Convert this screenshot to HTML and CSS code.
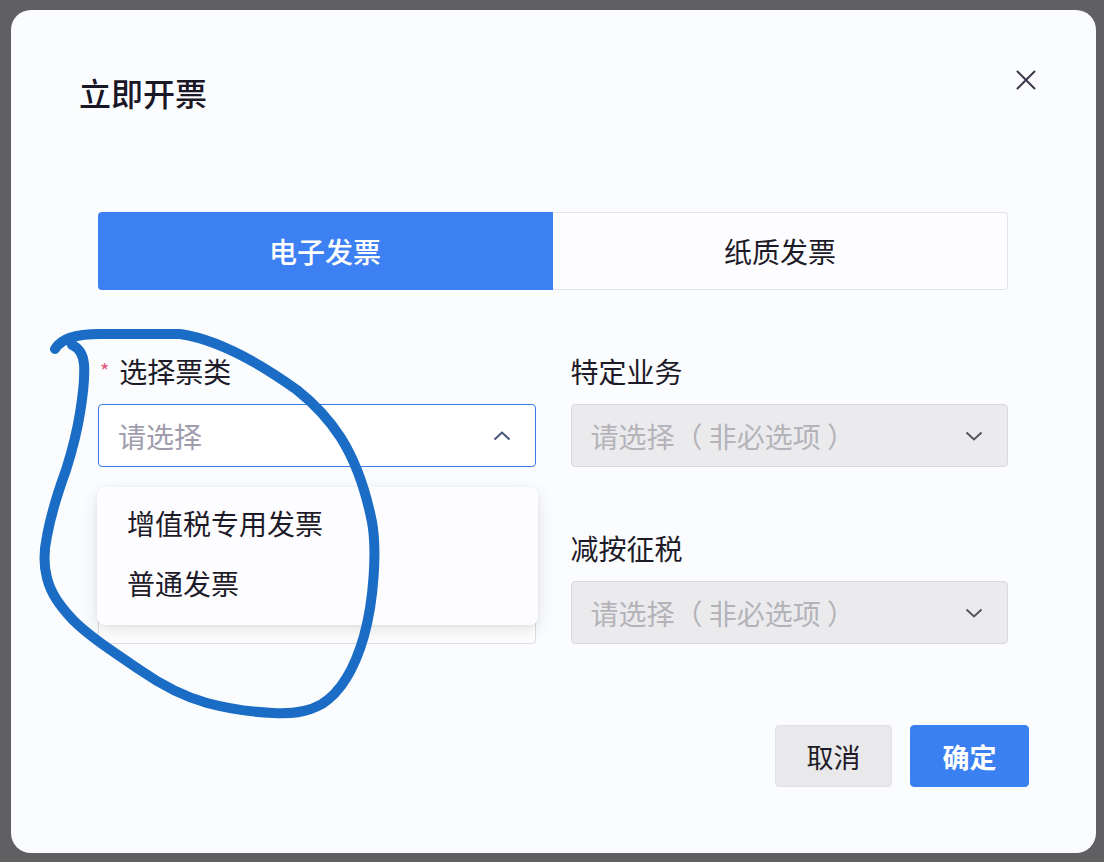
FILE: index.html
```html
<!DOCTYPE html>
<html>
<head>
	<meta charset="utf-8">
	<title>立即开票</title>
	<link rel="stylesheet" href="styles.css">
</head>
<body>

	<div class="dialog">
		<div class="dialog-header">
			<h2 class="dialog-title">立即开票</h2>
			<button type="button" class="close-btn">
				<svg width="20" height="20" viewBox="0 0 20 20">
					<path d="M1.5 1.5 L18.5 18.5 M18.5 1.5 L1.5 18.5" stroke="#3b3648" stroke-width="2" fill="none" stroke-linecap="round"/>
				</svg>
			</button>
		</div>

		<div class="dialog-body">
			<div class="tabs">
				<div class="tab active">电子发票</div>
				<div class="tab">纸质发票</div>
			</div>

			<div class="form">
				<div class="field">
					<label class="field-label"><span class="req">*</span>选择票类</label>
					<div class="select is-open">
						<span class="placeholder">请选择</span>
						<svg class="arrow" width="18" height="10" viewBox="0 0 18 10">
							<path d="M1.5 8.5 L9 1.5 L16.5 8.5" stroke="#47557a" stroke-width="2" fill="none"/>
						</svg>
						<ul class="dropdown">
							<li>增值税专用发票</li>
							<li>普通发票</li>
						</ul>
					</div>
				</div>

				<div class="field">
					<label class="field-label">特定业务</label>
					<div class="select is-disabled">
						<span class="placeholder">请选择（ 非必选项 ）</span>
						<svg class="arrow" width="18" height="10" viewBox="0 0 18 10">
							<path d="M1.5 1.5 L9 8.5 L16.5 1.5" stroke="#55535e" stroke-width="2" fill="none"/>
						</svg>
					</div>
				</div>

				<!-- this field sits under the open dropdown -->
				<div class="field">
					<label class="field-label"></label>
					<div class="select"></div>
				</div>

				<div class="field">
					<label class="field-label">减按征税</label>
					<div class="select is-disabled">
						<span class="placeholder">请选择（ 非必选项 ）</span>
						<svg class="arrow" width="18" height="10" viewBox="0 0 18 10">
							<path d="M1.5 1.5 L9 8.5 L16.5 1.5" stroke="#55535e" stroke-width="2" fill="none"/>
						</svg>
					</div>
				</div>
			</div>
		</div>

		<div class="dialog-footer">
			<button type="button" class="btn btn-cancel">取消</button>
			<button type="button" class="btn btn-primary">确定</button>
		</div>
	</div>

	<!-- hand drawn mark over the screenshot -->
	<svg class="annotation" width="1104" height="862" viewBox="0 0 1104 862">
		<path d="M55 349 C61 339 74 334 100 334 L180 334 C215 339 258 362 297 390 C316 405 330 421 341 438 C356 462 366 492 372 522 C377 550 374 600 364 636 C356 664 344 690 322 704 C306 713 290 714 273 713 C250 712 226 708 207 703 C182 696 160 684 140 670 C112 651 89 636 73 620 C60 606 51 594 47 578 C43 563 44 550 47 536 C51 514 58 492 66 470 C72 451 77 432 80 413 C83 395 85 378 84 364 C83 354 79 348 72 345"
			stroke="#1a6cc5" stroke-width="10" fill="none" stroke-linecap="round" stroke-linejoin="round"/>
	</svg>

</body>
</html>
```

FILE: styles.css
```css
* {
	box-sizing: border-box;
}

body {
	margin: 0;
	padding: 10px 0 0 11px;
	background-color: #606062;
	font-family: "Noto Sans CJK SC", "Noto Sans", sans-serif;
	color: #1e1b29;
	height: 862px;
	overflow: hidden;
}

.dialog {
	width: 1085px;
	height: 843px;
	background-color: #fbfcfe;
	border-radius: 20px;
	display: flex;
	flex-direction: column;
}

.dialog-header {
	display: flex;
	justify-content: space-between;
	align-items: flex-start;
	padding: 60px 60px 0 68px;
}

.dialog-title {
	margin: 0;
	font-size: 32px;
	line-height: 44px;
	font-weight: 500;
	color: #1a1726;
}

.close-btn {
	width: 20px;
	height: 20px;
	padding: 0;
	border: none;
	background: none;
	cursor: pointer;
}

.close-btn svg {
	display: block;
}

.dialog-body {
	padding: 0 88px 0 87px;
}

.tabs {
	margin-top: 98px;
	display: grid;
	grid-template-columns: 1fr 1fr;
	height: 78px;
}

.tab {
	display: flex;
	align-items: center;
	justify-content: center;
	font-size: 28px;
	color: #1e1b29;
	background-color: #fdfdff;
	border: 1px solid #e2e4ea;
	border-left: none;
	border-radius: 0 4px 4px 0;
}

.tab.active {
	background-color: #3d80f3;
	border-color: #3d80f3;
	color: #ffffff;
	font-weight: 500;
	border-radius: 4px 0 0 4px;
}

.form {
	margin-top: 63px;
	display: grid;
	grid-template-columns: 1fr 1fr;
	column-gap: 35px;
	row-gap: 63px;
}

.field-label {
	display: block;
	height: 36px;
	line-height: 36px;
	font-size: 28px;
	margin-bottom: 15px;
	color: #1e1b29;
}

.req {
	color: #e2587a;
	font-size: 20px;
	margin: 0 10px 0 2px;
	vertical-align: top;
}

.select {
	position: relative;
	height: 63px;
	border: 1px solid #dcdfe6;
	border-radius: 4px;
	background-color: #ffffff;
	display: flex;
	align-items: center;
	justify-content: space-between;
	padding: 0 24px 0 19px;
}

.select.is-open {
	border-color: #3b7be6;
}

.select.is-disabled {
	background-color: #ebebed;
	border-color: #dadadd;
}

.placeholder {
	font-size: 28px;
	color: #a09cad;
}

.is-disabled .placeholder {
	color: #b4b3b9;
}

.arrow {
	display: block;
	flex-shrink: 0;
}

.dropdown {
	position: absolute;
	z-index: 10;
	top: 82px;
	left: -2px;
	right: -3px;
	margin: 0;
	padding: 6px 0 12px;
	list-style: none;
	background-color: #fdfdff;
	border-radius: 8px;
	box-shadow: 0 6px 18px rgba(0, 0, 0, 0.10), 0 1px 4px rgba(0, 0, 0, 0.05);
}

.dropdown li {
	height: 60px;
	line-height: 60px;
	padding-left: 30px;
	font-size: 28px;
	color: #1e1b29;
}

.dialog-footer {
	margin-top: 81px;
	display: flex;
	justify-content: flex-end;
	gap: 18px;
	padding-right: 67px;
}

.btn {
	height: 62px;
	border-radius: 4px;
	font-family: inherit;
	font-size: 27px;
	cursor: pointer;
	padding: 0;
}

.btn-cancel {
	width: 117px;
	background-color: #e9e9eb;
	border: 1px solid #e2e2e5;
	color: #1e1b29;
}

.btn-primary {
	width: 119px;
	background-color: #3b80f1;
	border: 1px solid #3b80f1;
	color: #ffffff;
	font-weight: 700;
}

.annotation {
	position: absolute;
	z-index: 20;
	top: 0;
	left: 0;
	pointer-events: none;
}
```
